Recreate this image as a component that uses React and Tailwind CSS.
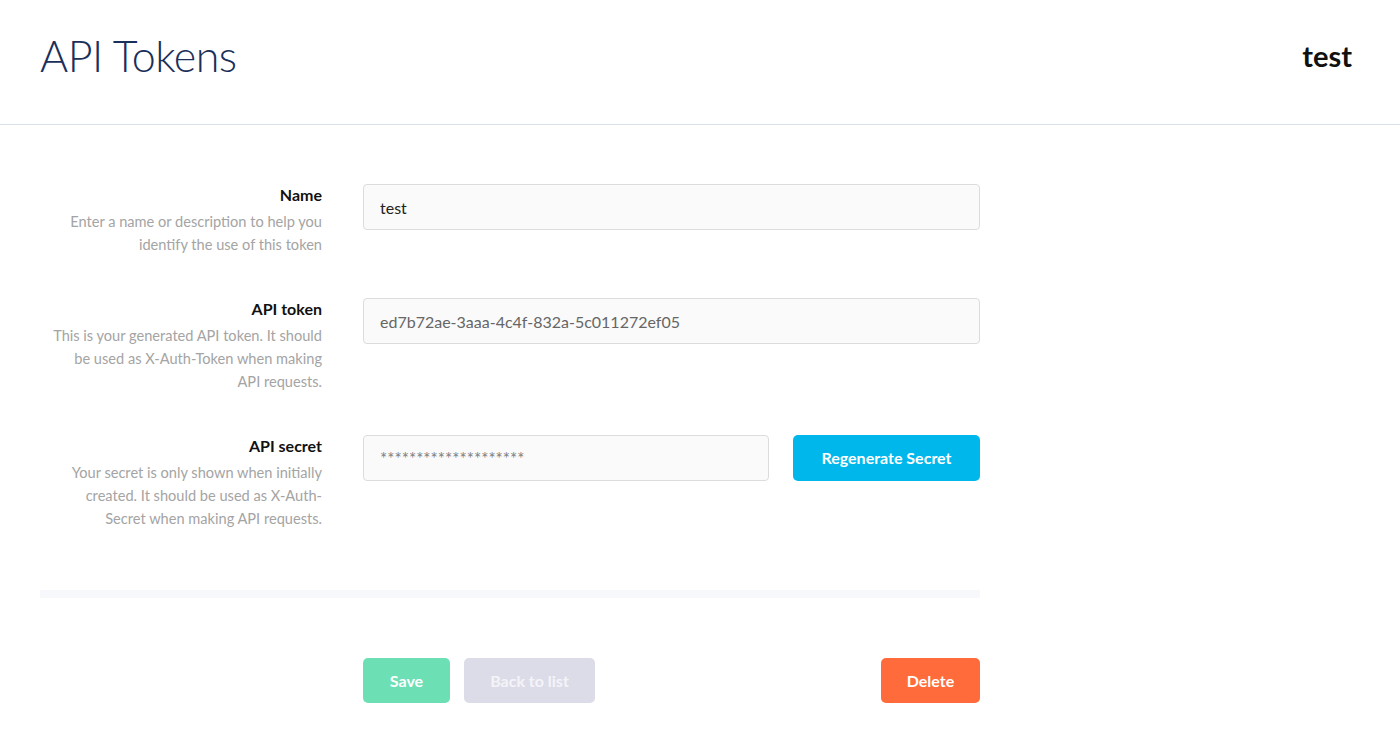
import React from 'react';

const fields = [
  {
    label: 'Name',
    help: ['Enter a name or description to help you', 'identify the use of this token'],
  },
  {
    label: 'API token',
    help: ['This is your generated API token. It should', 'be used as X-Auth-Token when making', 'API requests.'],
  },
  {
    label: 'API secret',
    help: ['Your secret is only shown when initially', 'created. It should be used as X-Auth-', 'Secret when making API requests.'],
  },
];

function Label({ label, help }) {
  return (
    <div className="w-[282px] shrink-0 text-right pt-[1px]">
      <div className="text-[16px] font-bold leading-[20px] text-[#111]">{label}</div>
      <div className="mt-[5px] text-[14.6px] leading-[23px] text-[#a4a4a4]">
        {help.map((line) => (
          <div key={line}>{line}</div>
        ))}
      </div>
    </div>
  );
}

export default function App() {
  return (
    <div className="min-h-screen bg-white font-['Lato',sans-serif]">
      {/* Header */}
      <header className="h-[125px] border-b border-[#d9e2ea] flex items-start justify-between px-[40px] pt-[28px]">
        <h1 className="text-[43px] font-light leading-[56px] text-[#1a2f5a] tracking-[-0.5px]">API Tokens</h1>
        <div className="text-[29px] font-bold leading-[56px] text-[#111] pr-[8px]">test</div>
      </header>

      {/* Form */}
      <div className="w-[940px] ml-[40px] pt-[59px]">
        <div className="flex gap-[41px]">
          <Label {...fields[0]} />
          <input
            readOnly
            value="test"
            className="w-[617px] h-[46px] rounded-[4px] border border-[#dcdcdc] bg-[#fafafa] px-[16px] text-[16px] text-[#222] outline-none"
          />
        </div>

        <div className="flex gap-[41px] mt-[42px]">
          <Label {...fields[1]} />
          <input
            readOnly
            value="ed7b72ae-3aaa-4c4f-832a-5c011272ef05"
            className="w-[617px] h-[46px] rounded-[4px] border border-[#dcdcdc] bg-[#fafafa] px-[16px] text-[16px] text-[#666] outline-none"
          />
        </div>

        <div className="flex gap-[41px] mt-[42px]">
          <Label {...fields[2]} />
          <div className="flex gap-[24px]">
            <input
              readOnly
              value="********************"
              className="w-[406px] h-[46px] rounded-[4px] border border-[#dcdcdc] bg-[#fafafa] px-[16px] text-[17px] text-[#808080] outline-none"
            />
            <button className="w-[187px] h-[46px] rounded-[5px] bg-[#00b7ec] text-white text-[16px] font-bold">
              Regenerate Secret
            </button>
          </div>
        </div>

        <div className="mt-[60px] h-[8px] bg-[#f7f8fc]" />

        <div className="flex items-center mt-[60px] ml-[323px]">
          <button className="w-[87px] h-[45px] rounded-[5px] bg-[#6ce0b4] text-white text-[16px] font-bold">Save</button>
          <button className="w-[131px] h-[45px] rounded-[5px] bg-[#dcdce8] text-[#f4f4f8] text-[16px] font-bold ml-[14px]">
            Back to list
          </button>
          <button className="w-[99px] h-[45px] rounded-[5px] bg-[#ff6b3b] text-white text-[16px] font-bold ml-auto">Delete</button>
        </div>
      </div>
    </div>
  );
}
